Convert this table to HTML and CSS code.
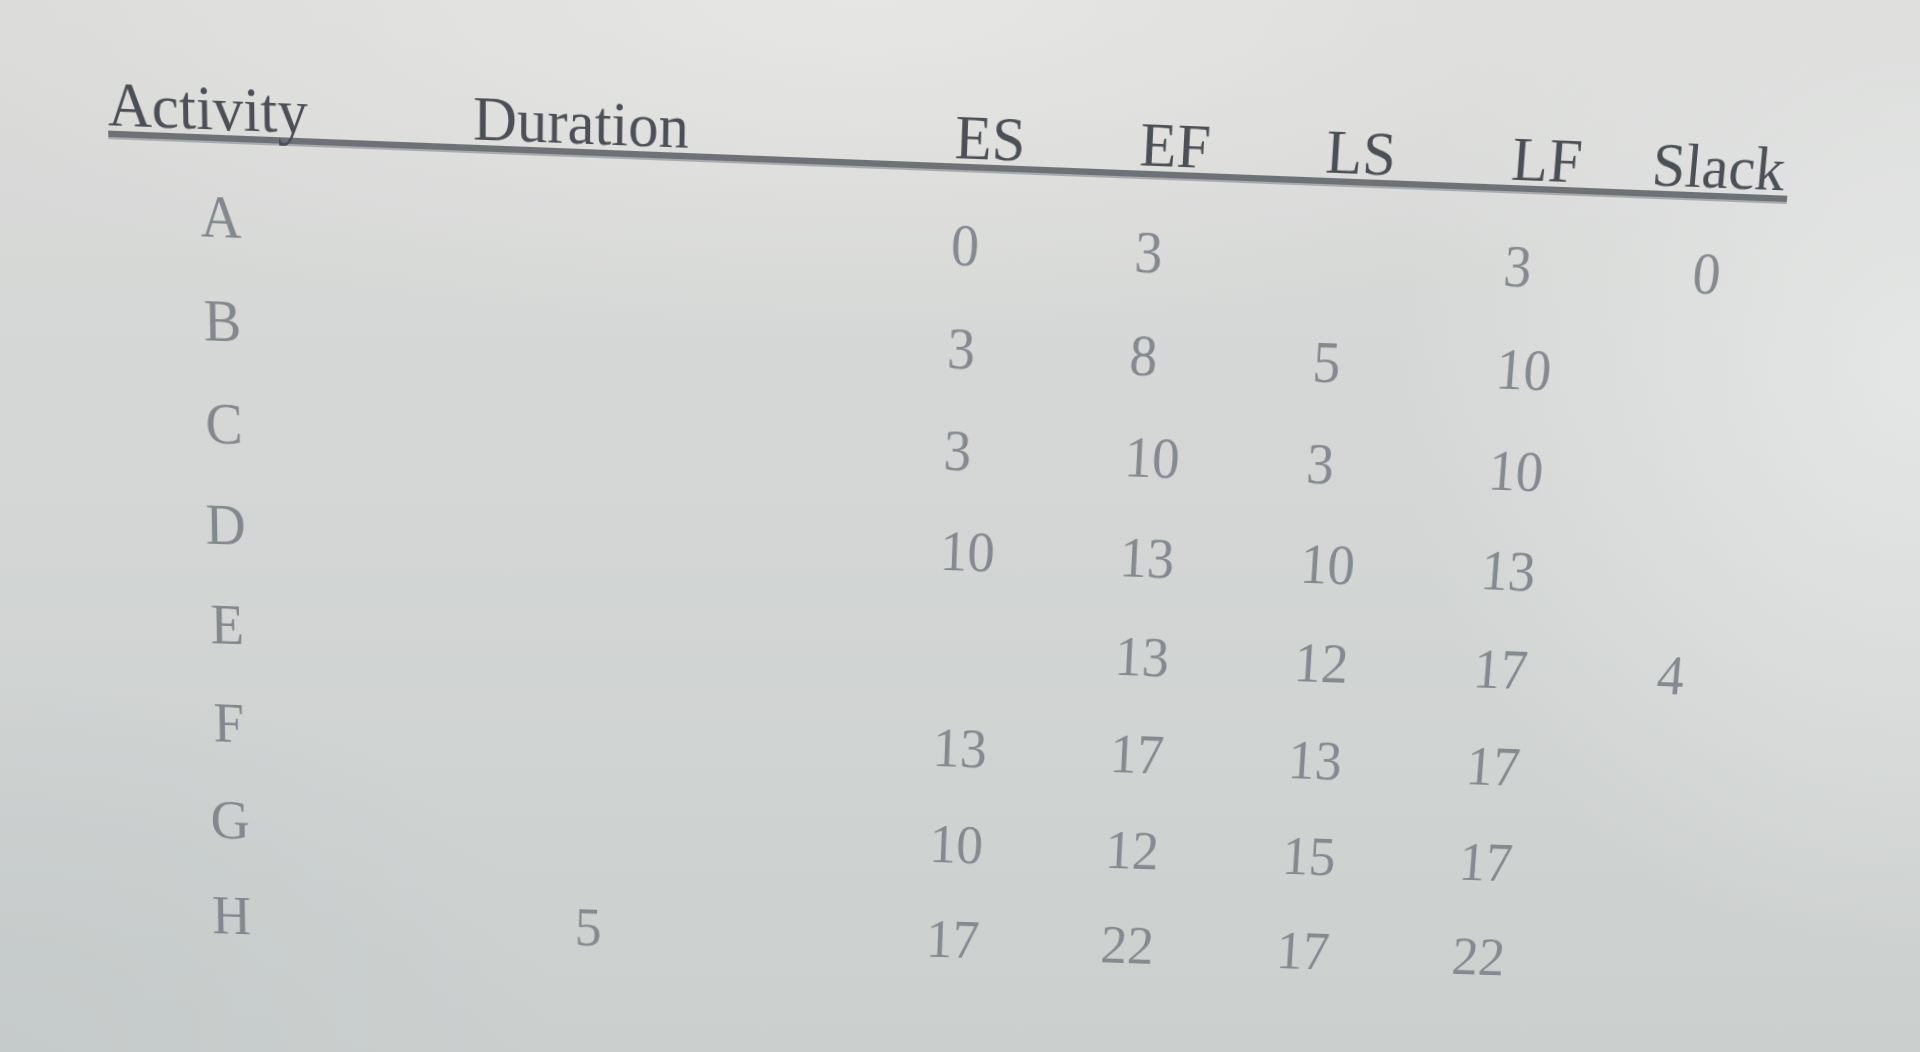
FILE: index.html
```html
<!DOCTYPE html>
<html lang="en">
<head>
<meta charset="utf-8">
<title>Activity schedule</title>
<link rel="stylesheet" href="styles.css">
</head>
<body>
<div class="sheet">
  <div class="table">
    <div class="head">
      <div class="h">Activity</div>
      <div class="h">Duration</div>
      <div class="h">ES</div>
      <div class="h">EF</div>
      <div class="h">LS</div>
      <div class="h">LF</div>
      <div class="h">Slack</div>
    </div>
    <div class="body">
      <div class="row"><div class="act">A</div><div class="dur"></div><div class="num">0</div><div class="num">3</div><div class="num"></div><div class="num">3</div><div class="num slack">0</div></div>
      <div class="row"><div class="act">B</div><div class="dur"></div><div class="num">3</div><div class="num">8</div><div class="num">5</div><div class="num">10</div><div class="num slack"></div></div>
      <div class="row"><div class="act">C</div><div class="dur"></div><div class="num">3</div><div class="num">10</div><div class="num">3</div><div class="num">10</div><div class="num slack"></div></div>
      <div class="row"><div class="act">D</div><div class="dur"></div><div class="num">10</div><div class="num">13</div><div class="num">10</div><div class="num">13</div><div class="num slack"></div></div>
      <div class="row"><div class="act">E</div><div class="dur"></div><div class="num"></div><div class="num">13</div><div class="num">12</div><div class="num">17</div><div class="num slack">4</div></div>
      <div class="row"><div class="act">F</div><div class="dur"></div><div class="num">13</div><div class="num">17</div><div class="num">13</div><div class="num">17</div><div class="num slack"></div></div>
      <div class="row"><div class="act">G</div><div class="dur"></div><div class="num">10</div><div class="num">12</div><div class="num">15</div><div class="num">17</div><div class="num slack"></div></div>
      <div class="row"><div class="act">H</div><div class="dur">5</div><div class="num">17</div><div class="num">22</div><div class="num">17</div><div class="num">22</div><div class="num slack"></div></div>
    </div>
  </div>
</div>
</body>
</html>
```
FILE: styles.css
```css
html, body {
  margin: 0;
  padding: 0;
  width: 100%;
  height: 100%;
  overflow: hidden;
}

body {
  background:
    radial-gradient(ellipse 700px 800px at 100% 35%, rgba(229, 231, 230, 0.95), rgba(229, 231, 230, 0) 75%),
    radial-gradient(ellipse 1300px 420px at 45% 0%, rgba(230, 230, 228, 1), rgba(230, 230, 228, 0) 80%),
    radial-gradient(ellipse 700px 500px at 0% 100%, rgba(196, 201, 201, 0.9), rgba(196, 201, 201, 0) 80%),
    linear-gradient(180deg, #dadad8 0%, #d4d7d6 40%, #cbd0cf 100%);
}

.sheet {
  width: 1920px;
  height: 1052px;
  box-sizing: border-box;
  padding: 90px 0 0 111px;
  transform-origin: 0 0;
  transform: matrix3d(1.030066, 0.040908, 0, 0.00000767621,
                      0.032750, 1.084489, 0, 0.0000749482,
                      0, 0, 1, 0,
                      -9.5404, -24.3044, 0, 1);
  font-family: "Liberation Serif", "Times New Roman", serif;
  filter: blur(0.7px);
}

.head,
.row {
  display: grid;
  grid-template-columns: 359.5px 477px 184px 185.5px 186px 141px 138.4px;
  width: 1671.4px;
}

.head {
  font-size: 60px;
  line-height: 50px;
  color: #4b5056;
  border-bottom: 6px solid #6d7277;
  box-shadow: 0 2px 0 #a7abae;
  white-space: nowrap;
}

.body {
  margin-top: 21.5px;
}

.row {
  height: 100px;
  font-size: 56px;
  line-height: 100px;
  color: #848a90;
  white-space: nowrap;
}

.act {
  text-align: center;
  padding-right: 140px;
  color: #83888e;
}

.dur {
  padding-left: 108.5px;
}

.slack {
  padding-left: 50px;
}
```
